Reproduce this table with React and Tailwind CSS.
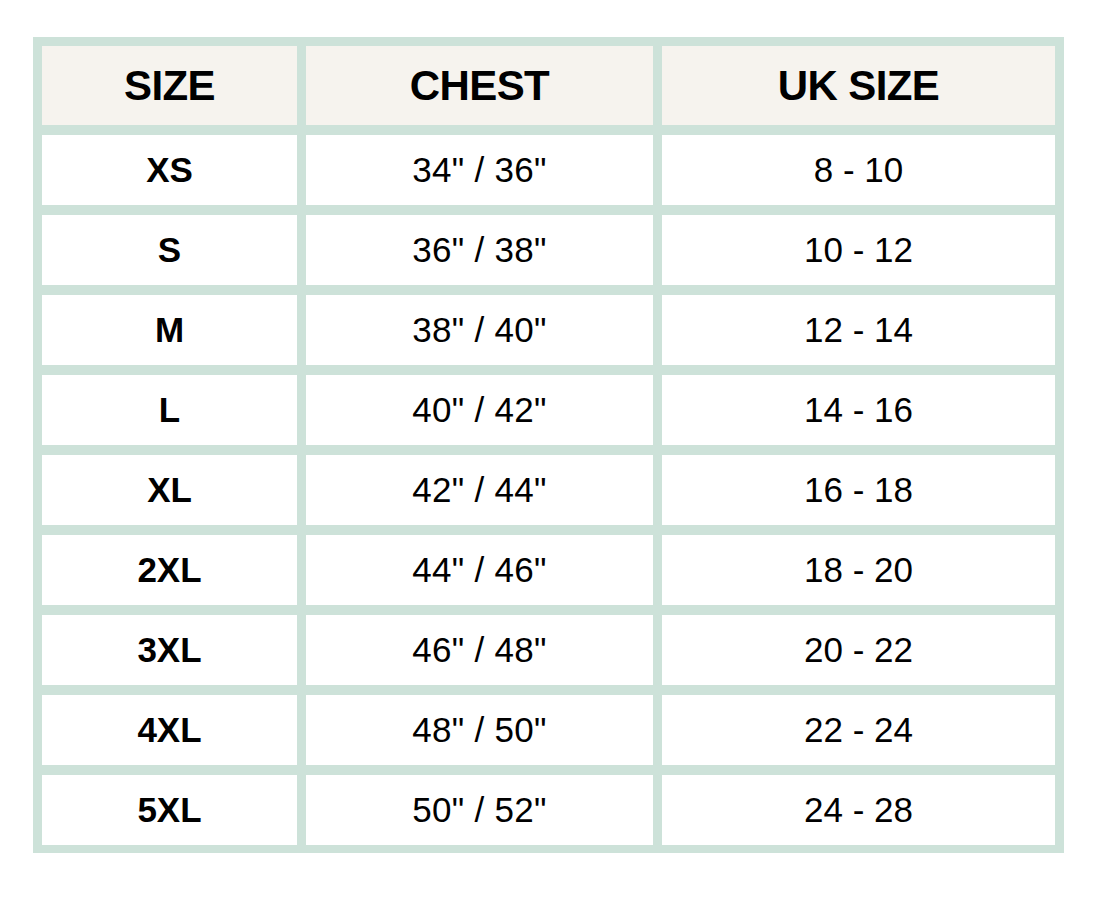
import { Fragment } from 'react';

const rows = [
  ['XS', '34" / 36"', '8 - 10'],
  ['S', '36" / 38"', '10 - 12'],
  ['M', '38" / 40"', '12 - 14'],
  ['L', '40" / 42"', '14 - 16'],
  ['XL', '42" / 44"', '16 - 18'],
  ['2XL', '44" / 46"', '18 - 20'],
  ['3XL', '46" / 48"', '20 - 22'],
  ['4XL', '48" / 50"', '22 - 24'],
  ['5XL', '50" / 52"', '24 - 28'],
];

export default function App() {
  return (
    <div className="min-h-screen bg-white pt-[37px] pl-[33px] font-['Liberation_Sans',Arial,sans-serif] text-black">
      <div className="w-[1031px] bg-[#cde2d9] pt-[9px] pl-[9px] pr-[9px] pb-[8px]">
        <div className="grid grid-cols-[255px_347px_393px] gap-x-[9px] gap-y-[10px]">
          {['SIZE', 'CHEST', 'UK SIZE'].map((h) => (
            <div
              key={h}
              className="h-[79px] bg-[#f6f3ee] flex items-center justify-center text-[42px] font-bold tracking-[-0.6px]"
            >
              {h}
            </div>
          ))}
          {rows.map((r) => (
            <Fragment key={r[0]}>
              <div className="h-[70px] bg-white flex items-center justify-center text-[35px] font-bold">
                {r[0]}
              </div>
              <div className="h-[70px] bg-white flex items-center justify-center text-[35px] tracking-[0.3px]">
                {r[1]}
              </div>
              <div className="h-[70px] bg-white flex items-center justify-center text-[35px]">
                {r[2]}
              </div>
            </Fragment>
          ))}
        </div>
      </div>
    </div>
  );
}
